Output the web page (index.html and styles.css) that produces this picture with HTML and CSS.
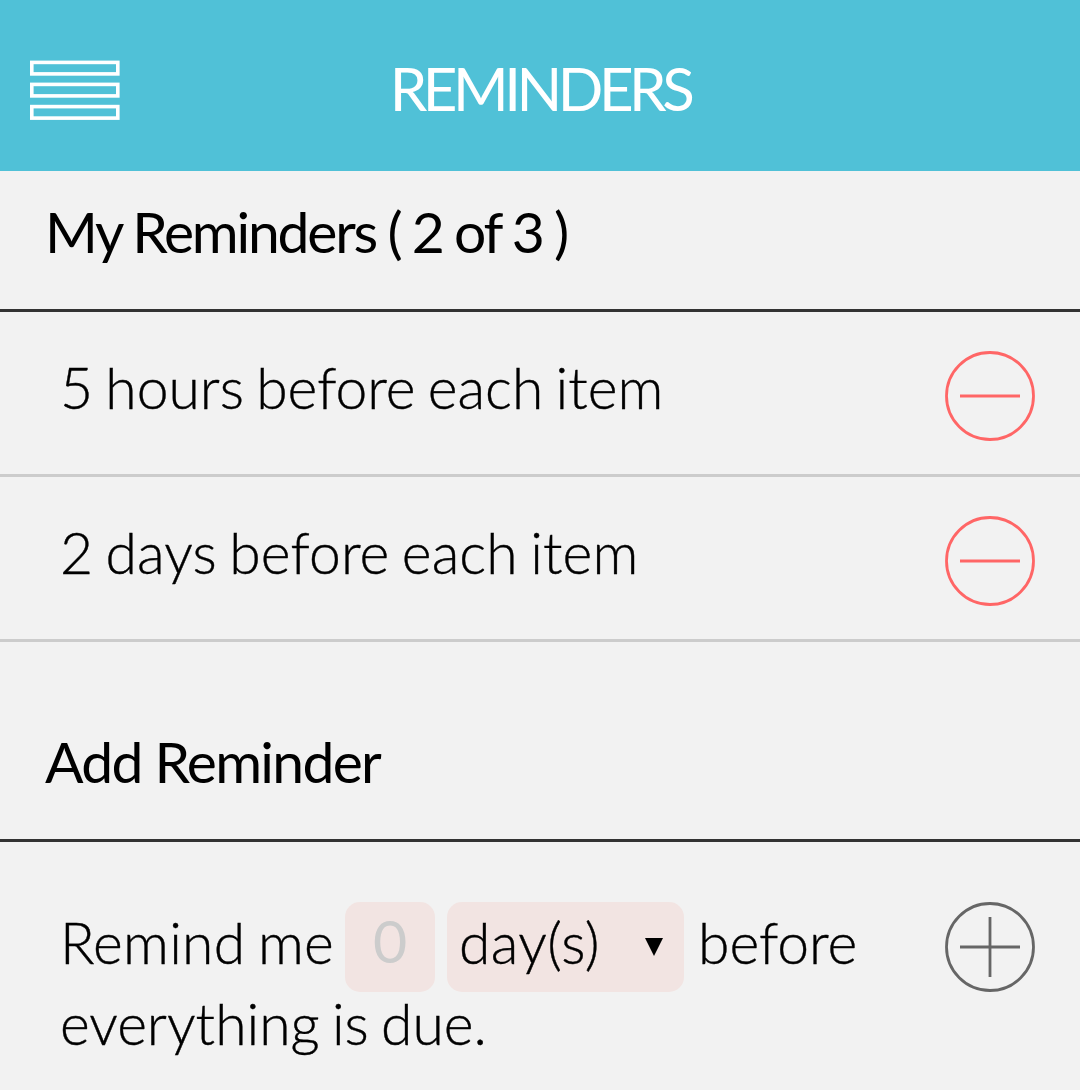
FILE: index.html
```html
<!DOCTYPE html>
<html lang="en">
<head>
<meta charset="utf-8">
<title>Reminders</title>
<link rel="stylesheet" href="styles.css">
</head>
<body>
<header class="topbar">
  <svg class="menu" width="90" height="60" viewBox="0 0 90 60"><g fill="none" stroke="#fff" stroke-width="3.6"><rect x="1.8" y="2.4" width="86" height="11.5"/><rect x="1.8" y="24.4" width="86" height="11.5"/><rect x="1.8" y="46.6" width="86" height="11.5"/></g></svg>
  <h1 class="title">REMINDERS</h1>
</header>
<main>
  <h2 class="heading first">My Reminders ( 2 of 3 )</h2>
  <ul class="list">
    <li class="row"><span class="text">5 hours before each item</span>
      <svg class="icon remove" width="90" height="90" viewBox="0 0 90 90"><circle cx="45" cy="45" r="43.5"/><path d="M15 45H75"/></svg></li>
    <li class="row"><span class="text days">2 days before each item</span>
      <svg class="icon remove" width="90" height="90" viewBox="0 0 90 90"><circle cx="45" cy="45" r="43.5"/><path d="M15 45H75"/></svg></li>
  </ul>
  <h2 class="heading second">Add Reminder</h2>
  <section class="form">
    <div class="sentence">
      <div class="line">
        <span class="text lead">Remind me</span>
        <span class="field amount">0</span>
        <span class="field unit"><span class="text">day(s)</span><svg width="18" height="18" viewBox="0 0 18 18"><path d="M0 0H18L9 18Z"/></svg></span>
        <span class="text">before</span>
      </div>
      <div class="text">everything is due.</div>
    </div>
    <svg class="icon add" width="90" height="90" viewBox="0 0 90 90"><circle cx="45" cy="45" r="43.5"/><path d="M15 45H75M45 15V75"/></svg>
  </section>
</main>
</body>
</html>
```
FILE: styles.css
```css
* { box-sizing: border-box; }
body { margin: 0; height: 1090px; overflow: hidden; background: #f2f2f2; color: #000; font: 300 57px/80px Lato, sans-serif; }
h1, h2, ul { margin: 0; padding: 0; font-size: inherit; }
.text { display: block; white-space: nowrap; word-spacing: -3.2px; -webkit-text-stroke: 0.4px #000; }
.days { letter-spacing: 0.12px; }
.topbar { height: 171px; background: #50c1d7; color: #fff; display: grid; grid-template-columns: 90px 1fr 90px; padding: 60px 30px 0; }
.title { font-weight: 400; font-size: 60px; line-height: 57px; text-align: center; letter-spacing: -4.5px; }
.heading { border-bottom: 3px solid #333; padding-left: 45px; font-size: 57px; font-weight: 400; white-space: nowrap; }
.first { height: 141px; padding-top: 20px; letter-spacing: -2.2px; word-spacing: -1px; }
.second { height: 200px; padding-top: 79px; letter-spacing: -1.7px; }
.list { list-style: none; }
.row { height: 165px; border-bottom: 3px solid #ccc; padding: 35px 45px 0 60px; display: flex; justify-content: space-between; }
.icon { flex: none; fill: none; stroke-width: 2.8; margin-top: 4px; }
.remove { stroke: #ff6666; }
.add { stroke: #666; margin: 0; }
.form { display: flex; justify-content: space-between; padding: 60px 45px 0 60px; }
.line { display: flex; height: 81px; }
.lead { width: 285px; letter-spacing: 0.25px; }
.field { height: 90px; border-radius: 15px; background: #f2e4e2; display: flex; }
.amount { width: 90px; color: #ccc; justify-content: center; margin-right: 12px; font-size: 59px; line-height: 77px; font-weight: 400; }
.unit { width: 237px; padding: 0 21px 0 12px; justify-content: space-between; margin-right: 14px; letter-spacing: 0.4px; }
.unit svg { margin-top: 36px; }
```
